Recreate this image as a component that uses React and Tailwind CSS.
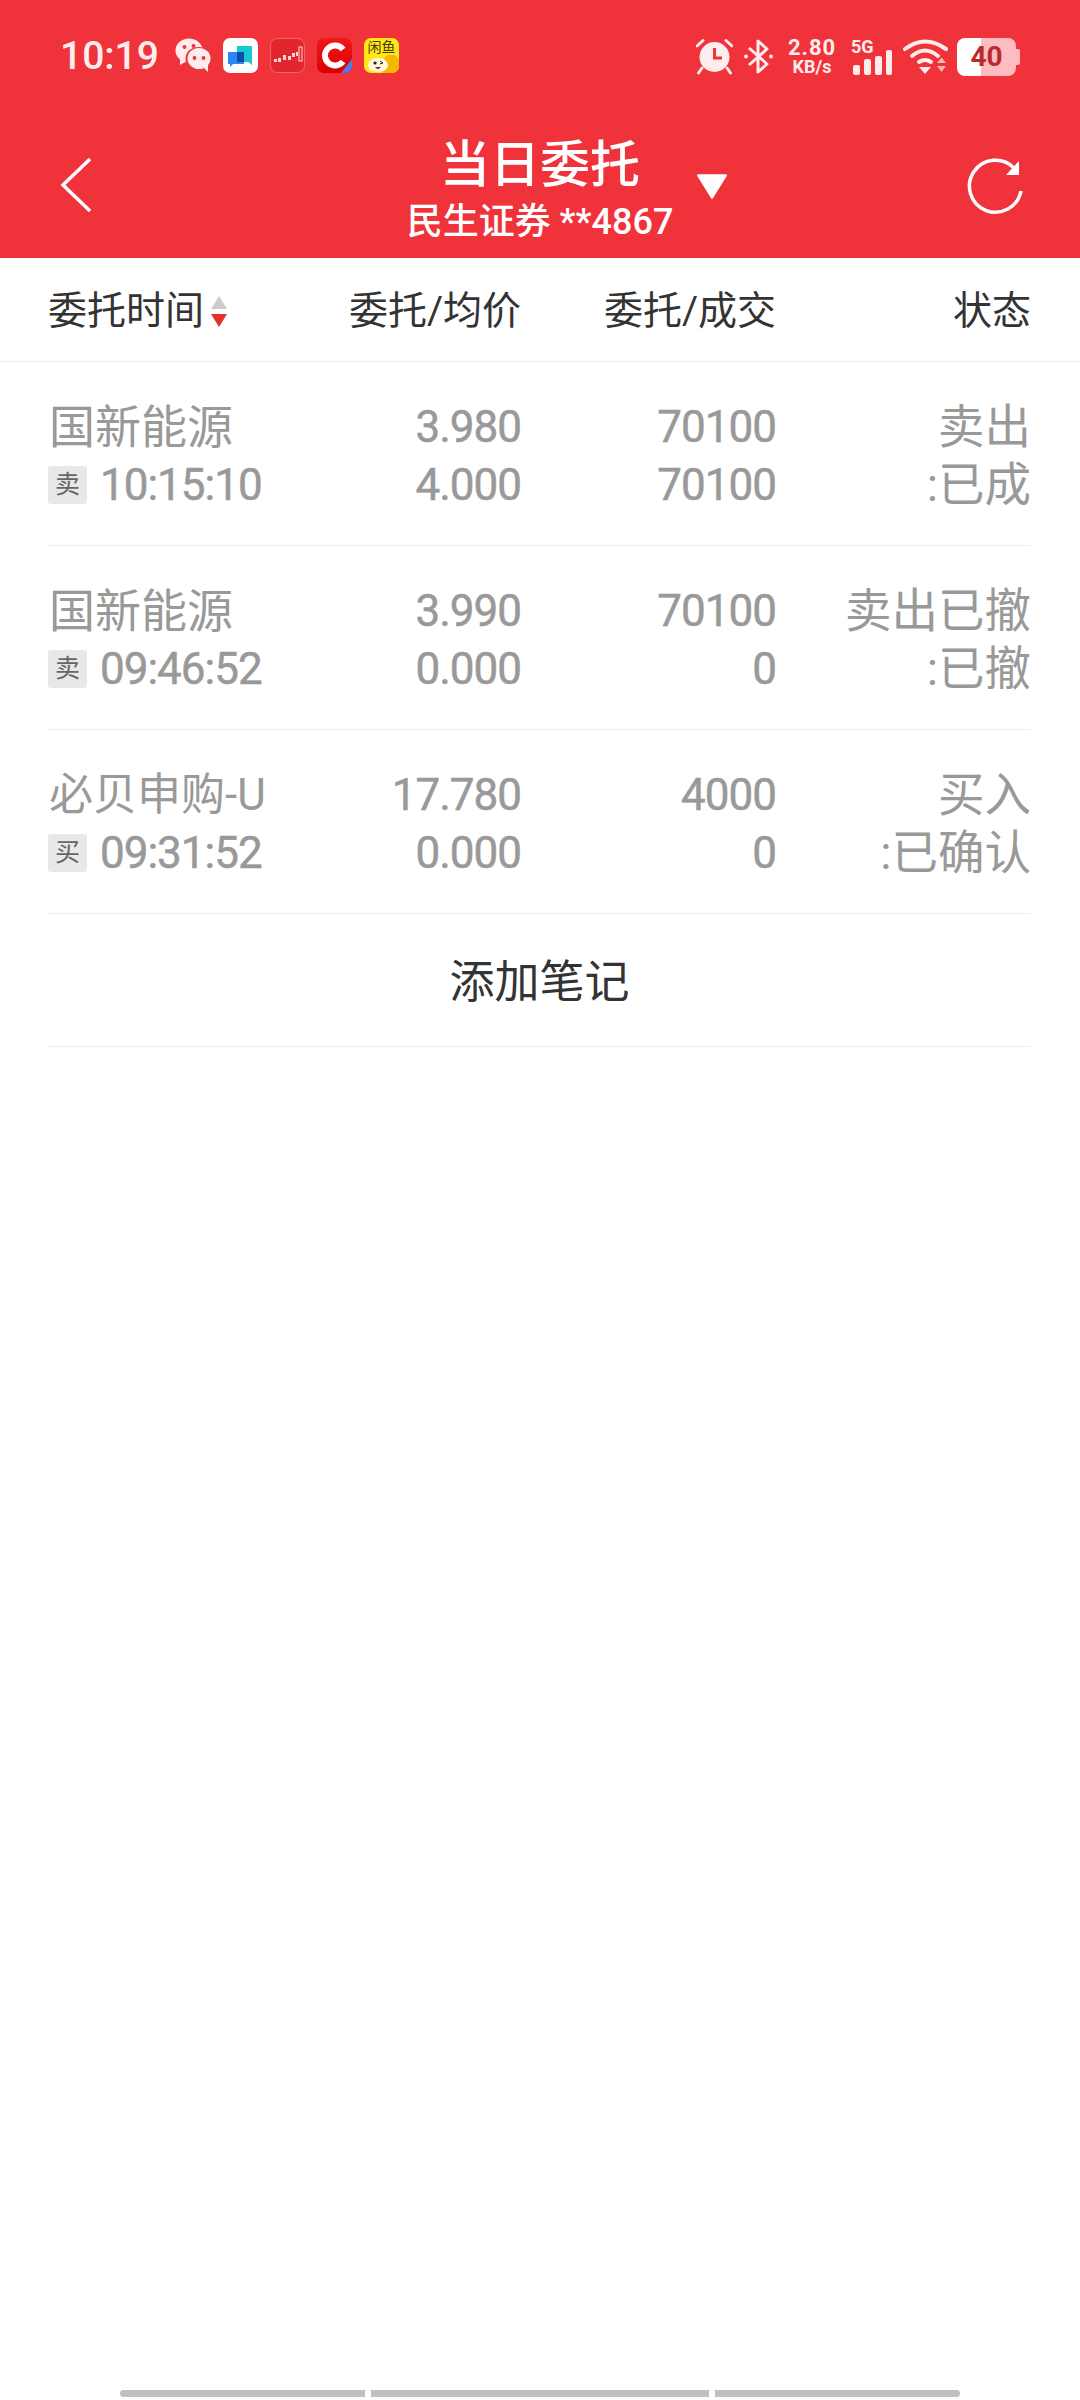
const rows = [
  { name: "国新能源", side: "卖", time: "10:15:10", p1: "3.980", p2: "4.000", q1: "70100", q2: "70100", s1: "卖出", s2: ":已成" },
  { name: "国新能源", side: "卖", time: "09:46:52", p1: "3.990", p2: "0.000", q1: "70100", q2: "0", s1: "卖出已撤", s2: ":已撤" },
  { name: "必贝申购-U", side: "买", time: "09:31:52", p1: "17.780", p2: "0.000", q1: "4000", q2: "0", s1: "买入", s2: ":已确认" },
];

const ink = "#ffecec";
const red = "#f0323b";

function WeChat() {
  return (
    <svg width="36" height="35" viewBox="0 0 36 35" className="shrink-0">
      <ellipse cx="14" cy="12.500" rx="13.500" ry="12" fill={ink} />
      <path d="M5 20 L5 27 L12 23 Z" fill={ink} />
      <ellipse cx="23.500" cy="20.500" rx="13" ry="11.500" fill={red} />
      <ellipse cx="24" cy="20.500" rx="11.500" ry="10.500" fill={ink} />
      <path d="M28 29 L33 34 L33 26 Z" fill={ink} />
      <circle cx="9.500" cy="9" r="2" fill={red} />
      <circle cx="18.500" cy="8" r="2" fill={red} />
      <circle cx="19.500" cy="20" r="1.900" fill={red} />
      <circle cx="28.500" cy="20" r="1.900" fill={red} />
    </svg>
  );
}

function ChatApp() {
  return (
    <svg width="35" height="35" viewBox="0 0 35 35" className="shrink-0">
      <rect width="35" height="35" rx="7" fill="#ffffff" />
      <path d="M14 8 H29 V23 L29 27 L25 24 H14 Z" fill="#17c9d3" />
      <path d="M5 14 H21 V26 H10 L7 29 V26 H5 Z" fill="#2b87f5" />
      <rect x="14" y="14" width="7" height="10" fill="#0b4fa8" />
    </svg>
  );
}

function Candle() {
  return (
    <svg width="35" height="35" viewBox="0 0 35 35" className="shrink-0">
      <rect x="0.500" y="0.500" width="34" height="34" rx="7" fill="#e3252c" stroke="#f0666b" strokeWidth="1" />
      <g fill="#ffd9d9">
        <rect x="4" y="21" width="3" height="3" />
        <rect x="8" y="20" width="3" height="4" />
        <rect x="13" y="17" width="3" height="5" />
        <rect x="18" y="18" width="3" height="4" />
        <rect x="22" y="15" width="3" height="4" />
        <rect x="26" y="14" width="2" height="4" />
      </g>
      <rect x="29" y="9" width="3" height="14" fill="none" stroke="#ffd9d9" strokeWidth="1" />
    </svg>
  );
}

function CApp() {
  return (
    <svg width="35" height="35" viewBox="0 0 35 35" className="shrink-0">
      <defs>
        <linearGradient id="cg" x1="0" y1="0" x2="0" y2="1">
          <stop offset="0" stopColor="#f01818" />
          <stop offset="1" stopColor="#d90000" />
        </linearGradient>
        <clipPath id="cc"><rect width="35" height="35" rx="7" /></clipPath>
      </defs>
      <g clipPath="url(#cc)">
        <rect width="35" height="35" fill="url(#cg)" />
        <path d="M26 11.500 A10 10 0 1 0 26 23.500" fill="none" stroke="#fff" strokeWidth="6" />
        <path d="M35 21 L35 35 L24 35 Z" fill="#4f7ee8" />
      </g>
    </svg>
  );
}

function Yellow() {
  return (
    <div className="w-[35px] h-[35px] rounded-[7px] bg-[#ffe81a] shrink-0 overflow-hidden flex flex-col items-center">
      <div className="text-[14px] leading-[15px] mt-[2px] text-[#4a3a00] whitespace-nowrap">闲鱼</div>
      <svg width="35" height="18" viewBox="0 0 35 18">
        <ellipse cx="27" cy="12" rx="9" ry="13" fill="#f5b800" />
        <ellipse cx="14" cy="10" rx="10" ry="7" fill="#fffbe0" />
        <circle cx="11" cy="8" r="1.600" fill="#222" />
        <path d="M16 6 L19 8 L16 9" fill="none" stroke="#222" strokeWidth="1" />
        <path d="M11 12 Q14 16 17 12 Z" fill="#a11" />
      </svg>
    </div>
  );
}

function Alarm() {
  return (
    <svg width="37" height="37" viewBox="0 0 37 37" className="shrink-0">
      <circle cx="18.500" cy="19" r="15" fill={ink} />
      <path d="M1 8 L7 2.500 M30 2.500 L36 8 M6 30 L2.500 35 M31 30 L34.500 35" stroke={ink} strokeWidth="3" strokeLinecap="round" />
      <path d="M18.500 10 V20 H26" fill="none" stroke={red} strokeWidth="3" />
    </svg>
  );
}

function Bluetooth() {
  return (
    <svg width="31" height="37" viewBox="0 0 31 37" className="shrink-0">
      <path d="M6 10 L24 26 L15 34 V3 L24 11 L6 27" fill="none" stroke={ink} strokeWidth="3" strokeLinejoin="round" />
      <circle cx="3" cy="18.500" r="2" fill={ink} />
      <circle cx="28" cy="18.500" r="2" fill={ink} />
    </svg>
  );
}

function Signal() {
  return (
    <svg width="41" height="38" viewBox="0 0 41 38" className="shrink-0 ml-[16px] overflow-visible">
      <text x="0" y="15" fontSize="18" fontWeight="700" fill={ink} fontFamily="Roboto">5G</text>
      <rect x="2" y="27" width="7" height="10" rx="2" fill={ink} />
      <rect x="13" y="21" width="7" height="16" rx="2" fill={ink} />
      <rect x="24" y="18" width="7" height="19" rx="2" fill={ink} />
      <rect x="35" y="12" width="6" height="25" rx="2" fill={ink} />
    </svg>
  );
}

function Wifi() {
  return (
    <svg width="45" height="37" viewBox="0 0 45 37" className="shrink-0 ml-[11px]">
      <path d="M2 11 Q22 -4 43 11" fill="none" stroke={ink} strokeWidth="4" strokeLinecap="round" />
      <path d="M9 18 Q22 7 35 18" fill="none" stroke={ink} strokeWidth="4" strokeLinecap="round" />
      <path d="M16 24 Q22 20 28 24" fill="none" stroke={ink} strokeWidth="4" strokeLinecap="round" />
      <path d="M16 29 H28 L22 36 Z" fill={ink} />
      <path d="M34 25 L38.500 19.500 L43 25 Z" fill={ink} opacity="0.7" />
      <path d="M34 28 H43 L38.500 34 Z" fill={ink} opacity="0.7" />
    </svg>
  );
}

function Chevron() {
  return (
    <svg width="32" height="56" viewBox="0 0 32 56" className="block">
      <path d="M30 2 L3 28 L30 54" fill="none" stroke="#fff" strokeWidth="3.500" />
    </svg>
  );
}

function Refresh() {
  return (
    <svg width="57" height="60" viewBox="0 0 57 60" className="block mr-[-3px]">
      <path d="M48 13 A26 26 0 1 0 55 36" fill="none" stroke="#ffffff" strokeWidth="3.500" />
      <path d="M53 6 V20 H40 Z" fill="#ffffff" />
    </svg>
  );
}

const num = "flex flex-col items-end text-[44px] tracking-[-1px] leading-[58px] [-webkit-text-stroke:0.5px_#999999]";

function Row({ r }) {
  return (
    <div className="grid grid-cols-[300px_173px_255px_255px] border-b border-[#eeeeee] h-[184px] pt-[4px] items-center text-[#999999]">
      <div className="flex flex-col">
        <div className="h-[58px] leading-[58px] whitespace-nowrap pl-[1px]">
          <span className={r.name === "国新能源" ? "text-[46px]" : "text-[44px]"}>{r.name}</span>
        </div>
        <div className="h-[58px] flex items-center gap-[13px]">
          <span className="w-[39px] h-[38px] bg-[#e8e8e8] rounded-[3px] flex items-center justify-center text-[25px] leading-none text-[#666666]">{r.side}</span>
          <span className="text-[44px] tracking-[-1px] leading-[58px] [-webkit-text-stroke:0.5px_#999999]">{r.time}</span>
        </div>
      </div>
      <div className={num}>
        <span>{r.p1}</span>
        <span>{r.p2}</span>
      </div>
      <div className={num}>
        <span>{r.q1}</span>
        <span>{r.q2}</span>
      </div>
      <div className="flex flex-col items-end text-[46.500px] leading-[58px]">
        <span>{r.s1}</span>
        <span>{r.s2}</span>
      </div>
    </div>
  );
}

export default function App() {
  return (
    <div className="w-[1080px] h-[2400px] bg-white flex flex-col font-['Roboto','Noto_Sans_CJK_SC',sans-serif]">
      <header className="h-[258px] bg-[#f0323b] text-white shrink-0 flex flex-col">
        <div className="h-[76px] pt-[38px] pl-[60px] pr-[60px] flex justify-between items-start box-content">
          <div className="flex items-start">
            <span className="text-[39px] leading-[37px] font-medium text-[#ffecec] w-[115px]">10:19</span>
            <div className="flex gap-[12px]">
              <WeChat />
              <ChatApp />
              <Candle />
              <CApp />
              <Yellow />
            </div>
          </div>
          <div className="flex items-start">
            <Alarm />
            <div className="ml-[10px]"><Bluetooth /></div>
            <div className="ml-[15px] w-[46px] flex flex-col items-center font-bold text-[#ffecec] whitespace-nowrap">
              <span className="text-[22px] leading-[20px] tracking-[1px]">2.80</span>
              <span className="text-[18px] leading-[18px]">KB/s</span>
            </div>
            <Signal />
            <Wifi />
            <div className="ml-[9px] flex items-center h-[38px]">
              <div className="w-[59px] h-[38px] rounded-[8px] bg-[linear-gradient(to_right,#ffffff_40%,#fdbcbf_40%)] flex items-center justify-center text-[28px] font-bold text-[#b92a30] leading-none">40</div>
              <div className="w-[4px] h-[16px] bg-[#fdbcbf] rounded-r-[2px]"></div>
            </div>
          </div>
        </div>
        <div className="grid grid-cols-[1fr_auto_1fr] items-center px-[60px] mt-[-2px] flex-1">
          <Chevron />
          <div className="flex flex-col items-center pt-[9px]">
            <span className="text-[50px] leading-[60px] font-medium">当日委托</span>
            <span className="text-[36px] leading-[44px] mt-[5px] whitespace-nowrap font-medium">民生证券 **4867</span>
          </div>
          <div className="flex items-center justify-between pl-[23px]">
            <svg width="32" height="26" viewBox="0 0 30 24" className="block mt-[2px]">
              <path d="M2 2 H28 L15 23 Z" fill="#ffffff" stroke="#ffffff" strokeWidth="2" strokeLinejoin="round" />
            </svg>
            <Refresh />
          </div>
        </div>
      </header>

      <div className="h-[104px] shrink-0 border-b border-[#eeeeee] pl-[48px] pr-[49px] pt-[4px] grid grid-cols-[300px_173px_255px_255px] items-center text-[39px] text-[#333333] leading-none">
        <div className="flex items-center gap-[6px]">
          <span>委托时间</span>
          <svg width="18" height="32" viewBox="0 0 18 32" className="block">
            <path d="M9 0 L17 13 H1 Z" fill="#cccccc" />
            <path d="M1 18 H17 L9 31 Z" fill="#e63030" />
          </svg>
        </div>
        <div className="text-right whitespace-nowrap">委托/均价</div>
        <div className="text-right whitespace-nowrap">委托/成交</div>
        <div className="text-right">状态</div>
      </div>

      <div className="pl-[48px] pr-[49px]">
        {rows.map((r) => (
          <Row key={r.time} r={r} />
        ))}
        <div className="h-[133px] border-b border-[#eeeeee] pt-[6px] flex items-center justify-center text-[45px] text-[#333333]">添加笔记</div>
      </div>

      <div className="mt-auto mb-[3px] flex justify-center gap-[6px]">
        <div className="w-[245px] h-[7px] bg-[#c0c0c0] rounded-l-full"></div>
        <div className="w-[338px] h-[7px] bg-[#c0c0c0]"></div>
        <div className="w-[245px] h-[7px] bg-[#c0c0c0] rounded-r-full"></div>
      </div>
    </div>
  );
}
